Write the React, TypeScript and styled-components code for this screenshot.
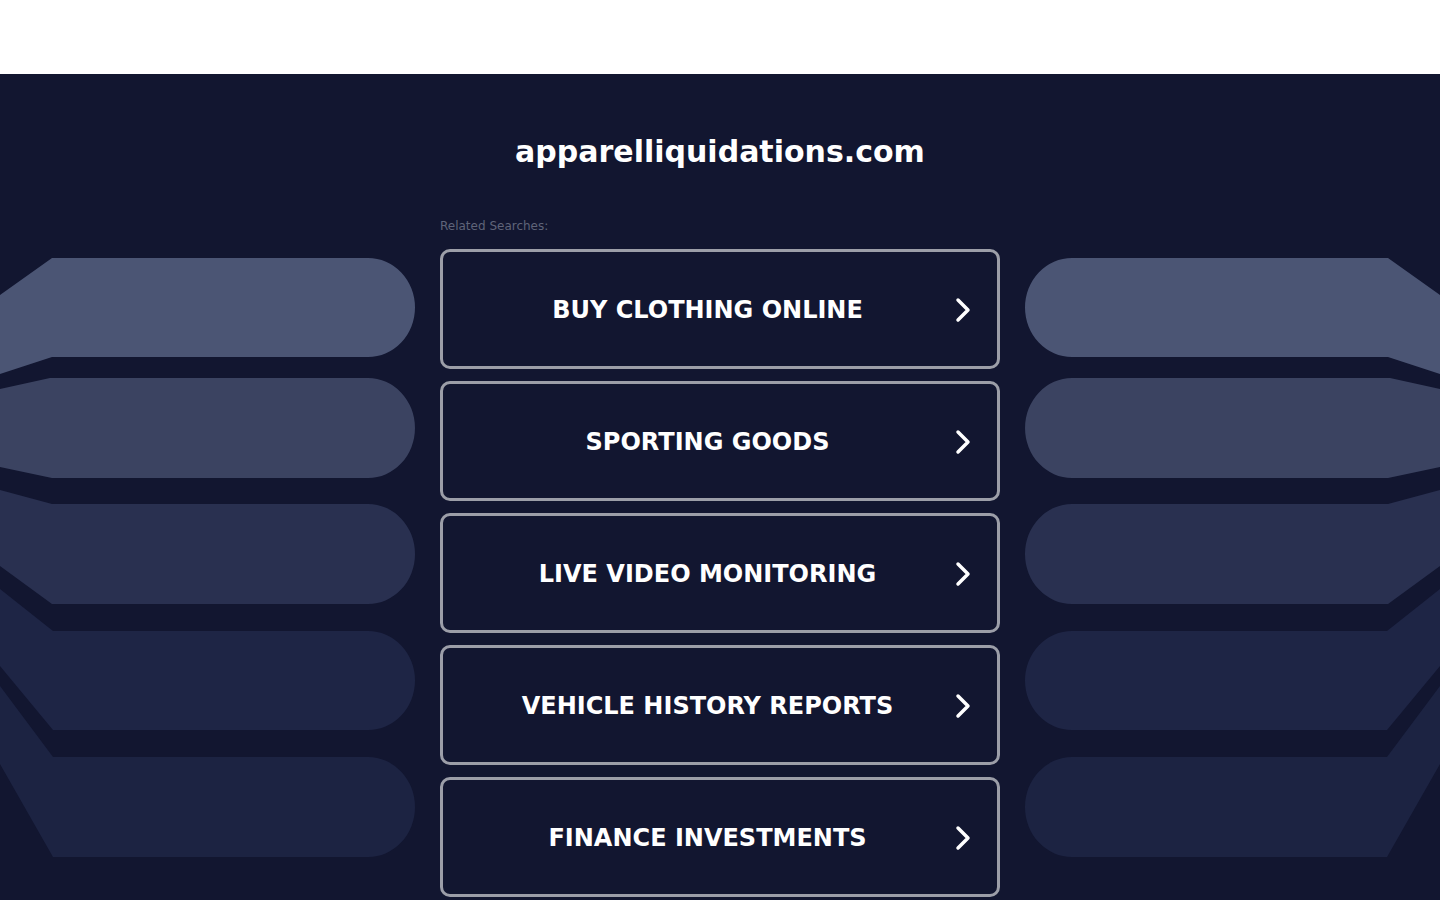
import React from "react";
import styled, { createGlobalStyle } from "styled-components";

const GlobalStyle = createGlobalStyle`
  html, body {
    margin: 0;
    padding: 0;
    background: #121630;
    font-family: "DejaVu Sans", "Liberation Sans", sans-serif;
  }
  * { box-sizing: border-box; }
`;

const Header = styled.header`
  height: 74px;
  background: #ffffff;
`;

const Main = styled.main`
  background: #121630;
  min-height: calc(100vh - 74px);
  display: grid;
  grid-template-columns: 1fr 560px 1fr;
  align-items: start;
`;

const Side = styled.div<{ $right?: boolean }>`
  padding-top: 176px;
  display: flex;
  justify-content: ${(p) => (p.$right ? "flex-end" : "flex-start")};
`;

const DecorSvg = styled.svg<{ $flip?: boolean }>`
  display: block;
  width: 415px;
  height: 610px;
  transform: ${(p) => (p.$flip ? "scaleX(-1)" : "none")};
`;

const Center = styled.div`
  padding-top: 60px;
  display: flex;
  flex-direction: column;
`;

const Title = styled.h1`
  margin: 0;
  font-size: 30px;
  line-height: 36px;
  font-weight: 700;
  color: #ffffff;
  text-align: center;
`;

const Related = styled.div`
  margin-top: 48px;
  margin-bottom: 15px;
  font-size: 12px;
  line-height: 16px;
  color: #5f6479;
`;

const List = styled.div`
  display: flex;
  flex-direction: column;
  gap: 12px;
`;

const LinkButton = styled.a`
  display: grid;
  align-items: center;
  height: 120px;
  padding: 2px 25px 0 0;
  border: 3px solid #9c9ea8;
  border-radius: 10px;
  text-decoration: none;
  cursor: pointer;
`;

const Label = styled.span`
  grid-area: 1 / 1;
  text-align: center;
  font-size: 24px;
  line-height: 30px;
  font-weight: 700;
  color: #ffffff;
  text-transform: uppercase;
`;

const Arrow = styled.svg`
  grid-area: 1 / 1;
  justify-self: end;
  width: 18px;
  height: 28px;
`;

const shapes: { d: string; fill: string }[] = [
  {
    d: "M0 295 L52 258 L368 258 A47 49.5 0 0 1 368 357 L52 357 L0 374 Z",
    fill: "#4b5574",
  },
  {
    d: "M0 389 L50 378 L368 378 A47 50 0 0 1 368 478 L52 478 L0 467 Z",
    fill: "#3b4361",
  },
  {
    d: "M0 490 L52 504 L368 504 A47 50 0 0 1 368 604 L52 604 L0 566 Z",
    fill: "#293050",
  },
  {
    d: "M0 589 L53 631 L368 631 A47 49.5 0 0 1 368 730 L53 730 L0 666 Z",
    fill: "#1e2545",
  },
  {
    d: "M0 686 L53 757 L368 757 A47 50 0 0 1 368 857 L53 857 L0 764 Z",
    fill: "#1c2342",
  },
];

const Decoration: React.FC<{ flip?: boolean }> = ({ flip }) => (
  <DecorSvg $flip={flip} viewBox="0 250 415 610" aria-hidden="true">
    {shapes.map((s, i) => (
      <path key={i} d={s.d} fill={s.fill} />
    ))}
  </DecorSvg>
);

const links = [
  "Buy Clothing Online",
  "Sporting Goods",
  "Live Video Monitoring",
  "Vehicle History Reports",
  "Finance Investments",
];

export default function App() {
  return (
    <>
      <GlobalStyle />
      <Header />
      <Main>
        <Side>
          <Decoration />
        </Side>
        <Center>
          <Title>apparelliquidations.com</Title>
          <Related>Related Searches:</Related>
          <List>
            {links.map((l) => (
              <LinkButton key={l} href="#">
                <Label>{l}</Label>
                <Arrow viewBox="0 0 18 28" aria-hidden="true">
                  <path
                    d="M4 4 L14 14 L4 24"
                    fill="none"
                    stroke="#ffffff"
                    strokeWidth="3.5"
                    strokeLinecap="round"
                    strokeLinejoin="round"
                  />
                </Arrow>
              </LinkButton>
            ))}
          </List>
        </Center>
        <Side $right>
          <Decoration flip />
        </Side>
      </Main>
    </>
  );
}
